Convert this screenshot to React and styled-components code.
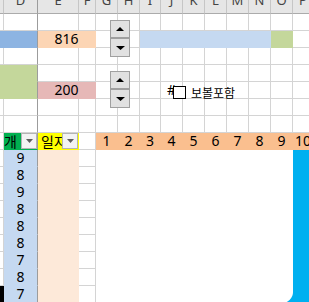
import React from 'react';
import styled, { createGlobalStyle } from 'styled-components';

const Global = createGlobalStyle`
  html, body { margin: 0; padding: 0; background: #fff; overflow: hidden; }
  body { width: 309px; height: 302px; }
`;

const COLS = [4, 34, 41, 17, 22, 22, 21, 22, 22, 22, 22, 22, 22, 21];
const LETTERS = ['C', 'D', 'E', 'F', 'G', 'H', 'I', 'J', 'K', 'L', 'M', 'N', 'O', 'P'];

const BLUE = '#8db4e2';
const LBLUE = '#c5d9f1';
const GREEN = '#c4d79b';
const PEACH = '#fcd5b4';
const PINK = '#e6b8b7';
const LPEACH = '#fde9d9';
const ORANGE = '#fabf8f';
const KGREEN = '#00b050';
const YELLOW = '#ffff00';
const GRID = '#d4d4d4';
const FROZEN = '#9c9c9c';

const Sheet = styled.div`
  position: relative;
  display: grid;
  grid-template-columns: ${COLS.map((w) => `${w}px`).join(' ')};
  grid-template-rows: 14px repeat(17, 17px);
  width: 309px;
  height: 302px;
  overflow: hidden;
  font-family: "Noto Sans", "Noto Sans CJK KR", sans-serif;
`;

const HeaderCell = styled.div`
  box-sizing: border-box;
  grid-row: 1;
  grid-column: ${(p) => p.$col};
  background: #e6e6e6;
  border-right: 1px solid ${(p) => (p.$frozen ? FROZEN : '#c6c6c6')};
  border-bottom: 1px solid #ababab;
  display: flex;
  justify-content: center;
  align-items: flex-end;
  padding-bottom: 6px;
  font-size: 13px;
  line-height: 13px;
  color: #444;
`;

const Cell = styled.div`
  box-sizing: border-box;
  grid-row: ${(p) => p.$row};
  grid-column: ${(p) => p.$col} / span ${(p) => p.$span || 1};
  background: ${(p) => p.$fill || '#fff'};
  border-right: 1px solid ${(p) => (p.$frozen ? FROZEN : p.$fill || GRID)};
  border-bottom: 1px solid ${(p) => p.$fill || GRID};
  display: flex;
  align-items: center;
  justify-content: ${(p) => (p.$left ? 'flex-start' : 'center')};
  padding-left: ${(p) => p.$pad || 0}px;
  font-size: 14px;
  line-height: 16px;
  color: #000;
  overflow: ${(p) => (p.$spill ? 'visible' : 'hidden')};
  white-space: nowrap;
`;

const FilterLabel = styled.span`
  flex: 1;
  min-width: 0;
  overflow: hidden;
  padding-left: ${(p) => p.$pad}px;
  font-family: "Noto Sans CJK KR", sans-serif;
  font-size: 14px;
  line-height: 16px;
`;

const DropBtn = styled.span`
  flex: none;
  width: 16px;
  height: 16px;
  box-sizing: border-box;
  border: 1px solid #b4b4b4;
  background: #f3f3f3;
  display: flex;
  align-items: center;
  justify-content: center;
`;

const Spinner = styled.div`
  position: absolute;
  left: 110px;
  top: ${(p) => p.$top}px;
  width: 20px;
  display: flex;
  flex-direction: column;
`;

const SpinBtn = styled.div`
  box-sizing: border-box;
  height: ${(p) => p.$h}px;
  border: 1px solid #a0a0a0;
  background: #e1e1e1;
  display: flex;
  align-items: center;
  justify-content: center;
`;

const CheckBox = styled.div`
  position: absolute;
  left: 173px;
  top: 86px;
  display: flex;
  align-items: center;
  gap: 5px;
`;

const Box = styled.span`
  box-sizing: border-box;
  width: 13px;
  height: 13px;
  border: 1px solid #000;
  background: #fff;
`;

const CheckText = styled.span`
  font-family: "Noto Sans CJK KR", sans-serif;
  font-size: 12px;
  line-height: 13px;
  color: #000;
`;

const ShapeBack = styled.div`
  position: absolute;
  left: 280px;
  top: 150px;
  width: 40px;
  height: 160px;
  background: #00b0f0;
`;

const ShapeFront = styled.div`
  position: absolute;
  left: 96px;
  top: 150px;
  width: 197px;
  height: 153px;
  background: #fff;
  border-bottom-right-radius: 11px;
`;

const Down = ({ w = 7, h = 4, color = '#5f5f5f' }) => (
  <svg width={w} height={h} viewBox={`0 0 ${w} ${h}`}>
    <polygon points={`0,0 ${w},0 ${w / 2},${h}`} fill={color} />
  </svg>
);

const Up = ({ w = 8, h = 4, color = '#000' }) => (
  <svg width={w} height={h} viewBox={`0 0 ${w} ${h}`}>
    <polygon points={`0,${h} ${w},${h} ${w / 2},0`} fill={color} />
  </svg>
);

const DATA = [9, 8, 9, 8, 8, 8, 7, 8, 7];

function buildCells() {
  const cells = [];
  for (let r = 1; r <= 17; r++) {
    for (let c = 0; c < 14; c++) {
      if ((r === 2 || r === 5) && c === 3) continue;
      const props = { $row: r + 1, $col: c + 1, $frozen: c === 1 };
      let content = null;

      if (r === 2) {
        if (c <= 1) props.$fill = BLUE;
        if (c === 2) { props.$fill = PEACH; props.$span = 2; content = '816'; }
        if (c >= 6 && c <= 11) props.$fill = LBLUE;
        if (c === 12) props.$fill = GREEN;
      }
      if (r === 4 || r === 5) {
        if (c <= 1) props.$fill = GREEN;
      }
      if (r === 5) {
        if (c === 2) { props.$fill = PINK; props.$span = 2; content = '200'; }
        if (c === 7) { props.$left = true; props.$pad = 6; content = '#'; }
      }
      if (r === 8) {
        if (c === 1) {
          props.$fill = KGREEN;
          content = (
            <>
              <FilterLabel $pad={0}>개</FilterLabel>
              <DropBtn><Down /></DropBtn>
            </>
          );
        }
        if (c === 2) {
          props.$fill = YELLOW;
          content = (
            <>
              <FilterLabel $pad={3}>일자</FilterLabel>
              <DropBtn><Down /></DropBtn>
            </>
          );
        }
        if (c >= 4) { props.$fill = ORANGE; content = String(c - 3); }
      }
      if (r >= 9) {
        if (c === 1) { props.$fill = LBLUE; content = String(DATA[r - 9]); }
        if (c === 2) props.$fill = LPEACH;
        if (c === 0 && r === 17) props.$fill = '#000';
      }
      cells.push(
        <Cell key={`${r}-${c}`} {...props}>
          {content}
        </Cell>
      );
    }
  }
  return cells;
}

export default function App() {
  return (
    <>
      <Global />
      <Sheet>
        {LETTERS.map((l, i) => (
          <HeaderCell key={l} $col={i + 1} $frozen={i === 1}>
            {i === 0 ? '' : l}
          </HeaderCell>
        ))}
        {buildCells()}

        <Spinner $top={20}>
          <SpinBtn $h={18}><Up /></SpinBtn>
          <SpinBtn $h={19}><Down w={9} h={4} color="#000" /></SpinBtn>
        </Spinner>
        <Spinner $top={71}>
          <SpinBtn $h={18}><Up /></SpinBtn>
          <SpinBtn $h={19}><Down w={9} h={4} color="#000" /></SpinBtn>
        </Spinner>

        <CheckBox>
          <Box />
          <CheckText>보볼포함</CheckText>
        </CheckBox>

        <ShapeBack />
        <ShapeFront />
      </Sheet>
    </>
  );
}
